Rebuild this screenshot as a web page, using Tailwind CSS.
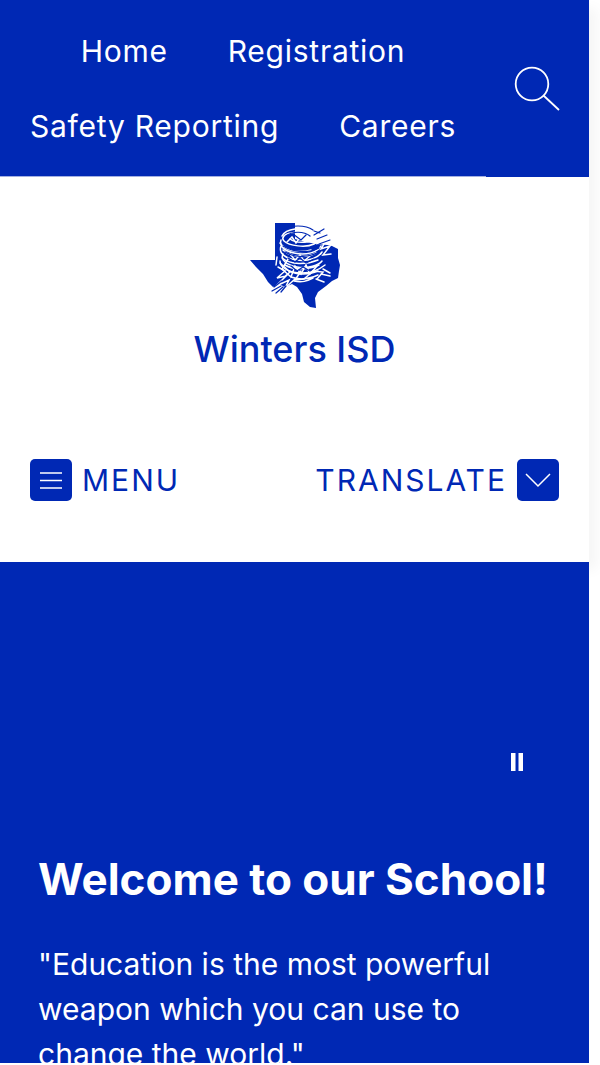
<!DOCTYPE html>
<html lang="en">
<head>
<meta charset="utf-8">
<meta name="viewport" content="width=device-width, initial-scale=1">
<title>Winters ISD</title>
<script src="https://cdn.jsdelivr.net/npm/@tailwindcss/browser@4"></script>
</head>
<body class="bg-white font-['Inter',sans-serif] text-[30px] leading-[45px]">
<div class="flex h-screen flex-col overflow-hidden pr-[11px] pb-0.5">
  <header class="relative shrink-0 bg-white text-[#0028b4] shadow-[8px_8px_12px_rgba(0,0,0,0.04)]">
    <div class="flex items-center justify-between bg-[#0028b4] pr-[29px] text-white">
      <nav aria-label="Quick links" class="flex flex-1 flex-wrap justify-center gap-x-[60px] gap-y-[30px] border-b border-[#a3b0e2] px-[29px] pt-[29px] pb-[27px]">
        <a href="#" class="tracking-wide">Home</a>
        <a href="#" class="tracking-wide">Registration</a>
        <a href="#" class="tracking-wide">Safety Reporting</a>
        <a href="#" class="tracking-wide">Careers</a>
      </nav>
      <button type="button" aria-label="Search" class="ml-7">
        <svg class="block size-[46px]" viewBox="0 0 46 46" fill="none" stroke="currentColor" stroke-width="1.8"><circle cx="18" cy="18" r="16.3"/><path d="M29.500 29.500 45 44"/></svg>
      </button>
    </div>
    <a href="#" class="flex flex-col items-center pt-[45px]">
      <svg class="block h-[87px] w-[92px]" viewBox="0 0 92 87" aria-hidden="true">
        <path fill="#0028b4" d="M26 1h20v16l10 3 12 2 10 1 5 1 6 3 0 9 2 7-1 6-1 7-6 3-6 5-8 6-3 6 1 10-6-1-6-5-2-8-5-7-5-3-7 3-6-3-6 3-5-5-5-8-7-7-6-7h25z"/>
        <g fill="none" stroke="#fff" stroke-width="1.500" stroke-linecap="round">
          <path d="M33 14c4-8 21-9 29-5 9 4 9 10 3 13-8 4-25 2-30-3-3-3 0-7 7-8 9-2 22 1 22 5 0 5-17 6-23 1"/>
          <path d="M32 18c-2 7 4 11 13 13 12 3 24-1 27-7M32 24c-3 8 6 13 16 14 12 2 22-3 25-8M34 32c-3 6 4 11 14 13 11 2 22-2 25-6M31 39c0 7 10 12 22 12 9 0 18-4 23-8"/>
          <path d="M31 21c5 7 17 11 31 7M34 28c7 7 22 9 33 3M33 36c9 7 24 7 36 2M36 43c8 5 24 5 34 0M40 49c8 4 20 4 29 0M42 55c8 3 18 2 27-2M45 59c8 2 13 0 19-3"/>
          <path d="M38 20l5-5 4 6 5-7 4 6 5-4M41 32l5 6 5-5 4 6 6-5M39 37l-6 10 9 8 4-11 6 8 5-9 4 9 7-8M66 16l9-5-6 10 9-4-6 10 9-3-7 9 8-1"/>
          <path d="M29 45l7 4-8 7 9-2-10 10 13-6-4 8 10-9M31 41l10 9-6 5M52 49l-6 9 9-1 9-8 10 1-6 7M28 35l-1 8M74 47l7 4M72 52l9 2M67 57l8 3M32 61l-5 5M37 64l-5 6"/>
        </g>
        <g fill="none" stroke="#0028b4" stroke-width="1.200" stroke-linecap="round">
          <path d="M34 9c7-7 23-6 30-1M37 14c6-5 18-5 24 0M44 12l8 6 5-5M34 24c10 6 24 8 36 2M36 30c10 6 21 6 32 1M39 36l7 4 5-4 6 5 8-4M42 44l6 5 6-4 7 4M65 13l10-6M68 17l10-4M70 22l11-4M25 65l8-6M23 69l9-5M27 71l7-6M32 70l5-6M65 9l6 2"/>
        </g>
      </svg>
      <h1 class="mt-4 text-[36px] leading-[48px] font-medium">Winters ISD</h1>
    </a>
    <div class="flex items-center justify-between px-[30px] pt-[86px] pb-[61px]">
      <button type="button" class="flex items-center gap-2.5 tracking-[2px]">
        <span class="flex size-[42px] items-center justify-center rounded-[5px] bg-[#0028b4] text-white"><svg class="size-[22px]" viewBox="0 0 22 22" stroke="currentColor" stroke-width="1.500"><path d="M0 4h22M0 11.500h22M0 19h22"/></svg></span>
        <span class="leading-[42px]">MENU</span>
      </button>
      <button type="button" class="flex items-center gap-2.5 tracking-[2px]">
        <span class="leading-[42px]">TRANSLATE</span>
        <span class="flex size-[42px] items-center justify-center rounded-[5px] bg-[#0028b4] text-white"><svg class="size-[26px]" viewBox="0 0 26 26" fill="none" stroke="currentColor" stroke-width="1.500"><path d="m1 7 12 12L25 7"/></svg></span>
      </button>
    </div>
  </header>
  <main class="relative min-h-0 flex-1 overflow-hidden bg-[#0028b4] pr-[30px] pl-[38px] pt-[190px] text-white">
    <div class="flex justify-end pr-[35px]">
      <button type="button" aria-label="Pause slideshow" class="block"><svg class="block h-5 w-[14px]" viewBox="0 0 14 20" fill="currentColor"><path d="M1 1h4.500v18H1zM8.500 1H13v18H8.500z"/></svg></button>
    </div>
    <h2 class="mt-[80px] text-[44px] leading-[54px] font-bold">Welcome to our School!</h2>
    <p class="mt-9">"Education is the most powerful weapon which you can use to change the world."</p>
  </main>
</div>
</body>
</html>
